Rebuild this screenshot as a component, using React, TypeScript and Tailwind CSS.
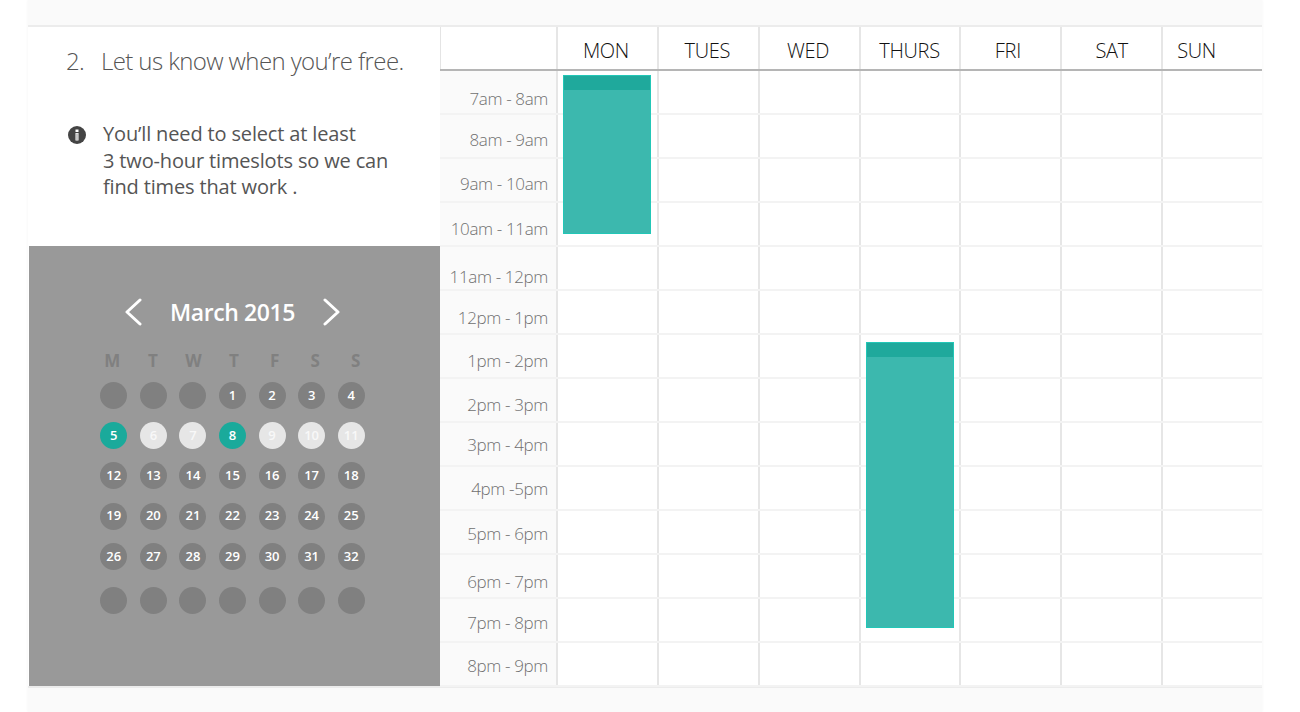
import React from "react";

const days = [
  { name: "MON", className: "pr-[3px]" },
  { name: "TUES", className: "pr-[2px]" },
  { name: "WED", className: "pr-[2px]" },
  { name: "THURS", className: "pr-[1px]" },
  { name: "FRI", className: "pr-[6px]" },
  { name: "SAT", className: "" },
  { name: "SUN", className: "pr-[32px]" },
];

// labels in the picture sit at uneven heights, so each row keeps its own padding
const slots = [
  { label: "7am - 8am", pad: "pt-[16px]" },
  { label: "8am - 9am", pad: "pt-[13px]" },
  { label: "9am - 10am", pad: "pt-[13px]" },
  { label: "10am - 11am", pad: "pt-[14px]" },
  { label: "11am - 12pm", pad: "pt-[18px]" },
  { label: "12pm - 1pm", pad: "pt-[15px]" },
  { label: "1pm - 2pm", pad: "pt-[14px]" },
  { label: "2pm - 3pm", pad: "pt-[14px]" },
  { label: "3pm - 4pm", pad: "pt-[10px]" },
  { label: "4pm -5pm", pad: "pt-[10px]" },
  { label: "5pm - 6pm", pad: "pt-[11px]" },
  { label: "6pm - 7pm", pad: "pt-[15px]" },
  { label: "7pm - 8pm", pad: "pt-[12px]" },
  { label: "8pm - 9pm", pad: "pt-[11px]" },
];

const weekLetters = ["M", "T", "W", "T", "F", "S", "S"];

const calendarRows: (number | null)[][] = [
  [null, null, null, 1, 2, 3, 4],
  [5, 6, 7, 8, 9, 10, 11],
  [12, 13, 14, 15, 16, 17, 18],
  [19, 20, 21, 22, 23, 24, 25],
  [26, 27, 28, 29, 30, 31, 32],
  [null, null, null, null, null, null, null],
];

const picked = [5, 8];
const unavailable = [6, 7, 9, 10, 11];

const dayClass = (day: number | null) => {
  if (day !== null && picked.includes(day)) return "bg-[#1aaa9b] text-white";
  if (day !== null && unavailable.includes(day)) return "bg-[#e6e6e6] text-[#f8f8f8]";
  return "bg-[#808080] text-white";
};

const Chevron = ({ flip }: { flip?: boolean }) => (
  <svg width="18" height="28" viewBox="0 0 18 28" fill="none">
    <polyline
      points={flip ? "2,2 15,14 2,26" : "16,2 3,14 16,26"}
      stroke="white"
      strokeWidth="3"
      strokeLinecap="round"
      strokeLinejoin="round"
    />
  </svg>
);

const InfoIcon = () => (
  <svg width="18" height="18" viewBox="0 0 18 18" className="shrink-0">
    <circle cx="9" cy="9" r="9" fill="#444444" />
    <rect x="7.5" y="3.5" width="3" height="2.5" fill="white" />
    <rect x="7.5" y="7" width="3" height="7.5" fill="white" />
    <rect x="8.6" y="7.5" width="0.8" height="6.5" fill="#777777" />
  </svg>
);

const EventBlock = ({ className }: { className: string }) => (
  <div className={`absolute w-[88px] border border-[#22c7b7] bg-[#3cb8ae] ${className}`}>
    <div className="h-[14px] bg-[#1fa99c]" />
  </div>
);

const App = () => {
  return (
    <div className="h-[712px] w-[1300px] overflow-hidden bg-white font-['Open_Sans',sans-serif]">
      <div className="ml-[28px] flex h-full w-[1234px] flex-col bg-[#fafafa] shadow-[0_0_3px_rgba(0,0,0,0.05)]">
        <div className="h-[25px] shrink-0" />

        <div className="flex h-[663px] border-y-2 border-[#ececec] bg-white">
          {/* Left panel */}
          <div className="flex w-[412px] shrink-0 flex-col pl-px">
            <div className="h-[219px] shrink-0 pl-[37px] pt-[16px]">
              <h2 className="flex text-[24px] font-light leading-[36px] tracking-[-0.6px] text-[#555555]">
                <span className="w-[35px]">2.</span>
                <span>Let us know when you’re free.</span>
              </h2>
              <div className="mt-[42px] flex gap-[17px] pl-[2px]">
                <div className="pt-[5px]">
                  <InfoIcon />
                </div>
                <p className="text-[20px] leading-[26.5px] tracking-[-0.15px] text-[#555555]">
                  You’ll need to select at least
                  <br />3 two-hour timeslots so we can
                  <br />
                  find times that work .
                </p>
              </div>
            </div>

            {/* Calendar */}
            <div className="flex-1 bg-[#999999] pl-[65px] pt-[46px]">
              <div className="flex w-[277px] flex-col">
                <div className="flex h-[40px] items-center justify-center">
                  <Chevron />
                  <span className="mx-[28px] text-[23px] font-semibold tracking-[-0.4px] text-white">March 2015</span>
                  <Chevron flip />
                </div>
                <div className="-ml-[2px] mt-[15px] grid h-[28px] w-[284px] grid-cols-7 items-center text-center text-[17px] font-bold text-[#808080]">
                  {weekLetters.map((letter, i) => (
                    <span key={i}>{letter}</span>
                  ))}
                </div>
                <div className="mt-[7px] flex flex-col gap-y-[13.2px]">
                  {calendarRows.map((row, r) => (
                    <div key={r} className={`grid grid-cols-7 ${r === 5 ? "mt-[4px]" : ""}`}>
                      {row.map((day, d) => (
                        <div
                          key={d}
                          className={`mx-auto flex h-[27px] w-[27px] items-center justify-center rounded-full text-[13px] font-semibold ${dayClass(day)}`}
                        >
                          {day}
                        </div>
                      ))}
                    </div>
                  ))}
                </div>
              </div>
            </div>
          </div>

          {/* Timetable */}
          <div className="relative flex-1">
            <div className="grid h-[44px] grid-cols-[116px_repeat(7,1fr)] border-b-2 border-[#b5b5b5]">
              <div className="border-l border-[#e4e4e4]" />
              {days.map((day) => (
                <div
                  key={day.name}
                  className={`flex items-center justify-center border-l-2 border-[#e6e6e6] pt-[5px] text-[20px] font-light tracking-[-0.3px] text-[#111111] ${day.className}`}
                >
                  {day.name}
                </div>
              ))}
            </div>
            {slots.map((slot) => (
              <div
                key={slot.label}
                className="grid h-[44px] grid-cols-[116px_repeat(7,1fr)] border-b-2 border-[#f3f3f3] last:h-[43px] last:border-b-0"
              >
                <div
                  className={`bg-[#fafafa] pr-[8px] text-right text-[17px] font-light leading-[24px] tracking-[-0.35px] text-[#707070] ${slot.pad}`}
                >
                  {slot.label}
                </div>
                {days.map((day) => (
                  <div key={day.name} className="border-l-2 border-[#e6e6e6]" />
                ))}
              </div>
            ))}

            <EventBlock className="left-[123px] top-[48px] h-[159px]" />
            <EventBlock className="left-[426px] top-[315px] h-[286px]" />
          </div>
        </div>

        <div className="flex-1" />
      </div>
    </div>
  );
};

export default App;
